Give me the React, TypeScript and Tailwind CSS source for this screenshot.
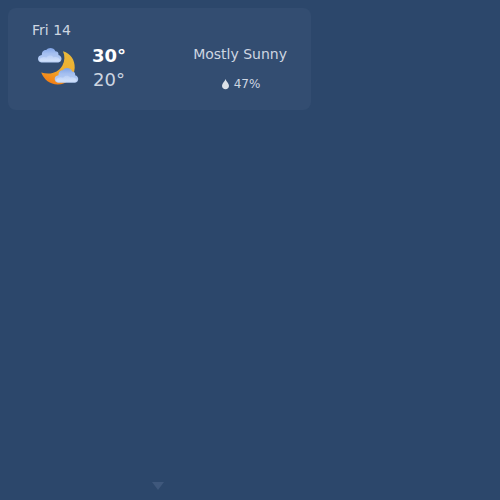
function Cloud({ transform }: { transform: string }) {
  return (
    <g transform={transform}>
      <path
        d="M3.6 14.9 C-.8 14.6-1.2 7.7 4 7.4 C4 3.6 6.2 2.2 8.4 2.4 C10.4-.7 16.2-.4 17.6 3.6 C20 3.6 21 5.4 20.6 7.4 C24.9 8.2 24.6 14.5 20.5 14.9 Z"
        fill="url(#cloudEdge)"
      />
      <path
        d="M1.4 12.4 C3 9.4 6.4 9 8.6 10 C10.4 7.2 14.2 7.4 15.8 9.8 C18.4 8.7 21.4 9.8 22.4 12.4 C21.8 13.5 21 13.9 20 13.9 H4 C2.8 13.9 2 13.4 1.4 12.4 Z"
        fill="url(#cloudFront)"
        opacity="0.75"
      />
    </g>
  );
}

function WeatherIcon() {
  return (
    <svg viewBox="0 0 42 40" className="h-10 w-[42px]" aria-hidden="true">
      <defs>
        <linearGradient id="moon" x1="0.7" y1="0" x2="0.3" y2="1">
          <stop offset="0" stopColor="#e9b93a" />
          <stop offset="0.5" stopColor="#efae30" />
          <stop offset="1" stopColor="#f57c12" />
        </linearGradient>
        <linearGradient id="cloudEdge" x1="0" y1="0" x2="0" y2="1">
          <stop offset="0" stopColor="#7fa3e6" />
          <stop offset="0.4" stopColor="#a6c0f0" />
          <stop offset="1" stopColor="#b9d0f6" />
        </linearGradient>
        <linearGradient id="cloudFront" x1="0" y1="0" x2="0" y2="1">
          <stop offset="0" stopColor="#bfd3f7" />
          <stop offset="1" stopColor="#dce9fd" />
        </linearGradient>
      </defs>
      <path
        d="M26 4.2 C33.8 6.3 38 13.3 37.7 20.8 C37.3 30.5 29.8 37.6 20.5 37.5 C13.2 37.3 6.8 32.5 4.2 25.4 C13.7 28.2 21.6 25.3 25.4 18.4 C27.9 13.9 28 8.6 26 4.2 Z"
        fill="url(#moon)"
      />
      <Cloud transform="translate(.8 .6)" />
      <Cloud transform="translate(17.5 20.8)" />
    </svg>
  );
}

export default function App() {
  return (
    <main className="flex h-[500px] w-[500px] flex-col justify-between bg-[#2c476b] font-['DejaVu_Sans',sans-serif] text-[#ced6e1]">
      <section className="mt-2 ml-2 flex h-[102px] w-[303px] justify-between rounded-lg bg-[#334d71] pr-6 pl-6">
        <div className="pt-3">
          <h2 className="text-[14px] leading-5">Fri 14</h2>
          <div className="mt-[6px] flex">
            <div className="ml-[5px] pt-px">
              <WeatherIcon />
            </div>
            <div className="ml-[13px] text-[18px] leading-6">
              <div className="-mt-[2px] font-bold text-white">30°</div>
              <div className="ml-px">20°</div>
            </div>
          </div>
        </div>
        <div className="flex flex-col items-center pt-9">
          <p className="text-[14px] leading-5">Mostly Sunny</p>
          <div className="mt-[10px] ml-[2px] flex items-center gap-[5px] text-[12px] leading-5">
            <svg viewBox="0 0 7 11" className="h-[11px] w-[7px]" aria-hidden="true">
              <path d="M3.5 0 C4 2.2 7 4.3 7 6.8 C7 9 5.4 10.2 3.5 10.2 C1.6 10.2 0 9 0 6.8 C0 4.3 3 2.2 3.5 0 Z" fill="#dbe1e8" />
            </svg>
            <span>47%</span>
          </div>
        </div>
      </section>
      <svg viewBox="0 0 12 8" className="mb-[10px] ml-[152px] h-2 w-3" aria-hidden="true">
        <path d="M0 0 H12 L6 8 Z" fill="#3f587c" />
      </svg>
    </main>
  );
}
